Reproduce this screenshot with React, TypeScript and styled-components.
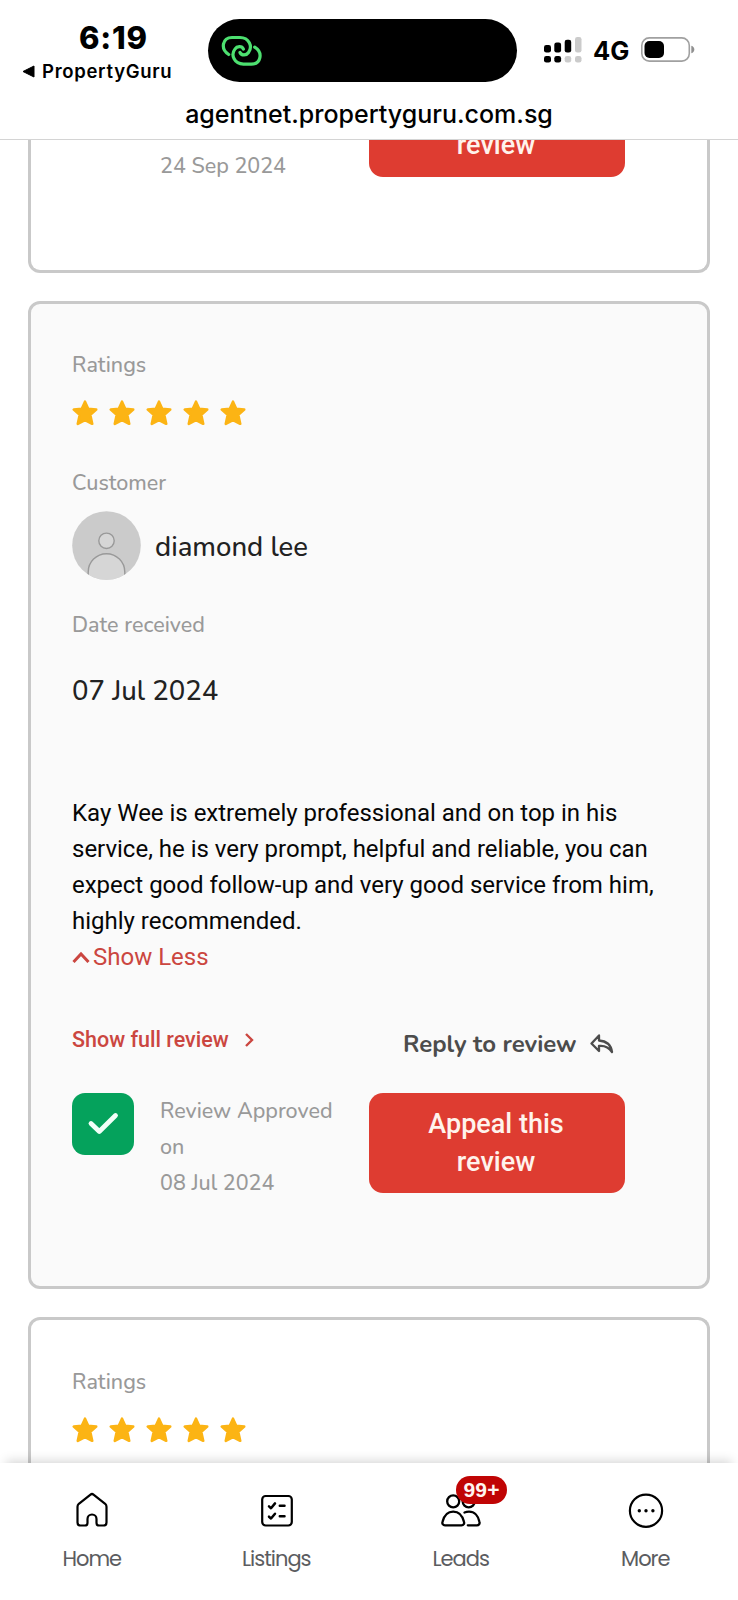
import React from "react";
import styled, { createGlobalStyle } from "styled-components";

const GlobalStyle = createGlobalStyle`
  * { box-sizing: border-box; }
  body { margin: 0; background: #fff; }
  button { font: inherit; border: 0; background: none; padding: 0; }
  p { margin: 0; }
  svg { display: block; flex: none; }
`;

const rounded = `"Nunito", Lato, "Open Sans", sans-serif`;
const system = `Inter, "Liberation Sans", sans-serif`;

const Screen = styled.div`
  display: flex;
  flex-direction: column;
  width: 738px;
  height: 1600px;
  overflow: hidden;
  background: #fff;
`;

const Header = styled.header`
  flex: none;
  height: 140px;
  border-bottom: 1px solid #d4d4d4;
  font-family: ${system};
  color: #000;
`;

const StatusBar = styled.div`
  display: flex;
  height: 97px;
  padding-top: 19.4px;
`;

const ClockColumn = styled.div`
  flex: none;
  width: 208px;
`;

const Clock = styled.div`
  padding-left: 79px;
  font-size: 31px;
  font-weight: 800;
  line-height: 38px;
  letter-spacing: 0.8px;
`;

const BackLink = styled.div`
  display: flex;
  align-items: center;
  gap: 7px;
  padding-left: 22px;
  margin-top: 2px;
  font-size: 18.5px;
  font-weight: 600;
  line-height: 24px;
  letter-spacing: 0.7px;
`;

const Island = styled.div`
  flex: none;
  width: 309px;
  height: 63px;
  padding: 16px 0 0 13px;
  border-radius: 32px;
  background: #000;
`;

const Indicators = styled.div`
  flex: none;
  display: flex;
  align-items: flex-start;
  padding: 18px 0 0 27px;
`;

const Network = styled.span`
  flex: none;
  width: 58.5px;
  padding-left: 11px;
  font-size: 25.5px;
  font-weight: 700;
  line-height: 30px;
  margin-top: -1px;
`;

const Address = styled.div`
  text-align: center;
  font-size: 25px;
  font-weight: 550;
  line-height: 35px;
`;

const Feed = styled.main`
  flex: 1;
  min-height: 0;
  overflow: hidden;
  display: flex;
  flex-direction: column;
  gap: 28px;
  padding: 0 28px;
`;

const Card = styled.section<{ $height: number; $tone?: string; $part?: "tail" | "head" }>`
  flex: none;
  height: ${(p) => p.$height}px;
  padding: ${(p) => (p.$part === "tail" ? "0" : "43.5px")} 41px 0;
  border: 3px solid #c9c9c9;
  border-radius: 12px;
  background: ${(p) => p.$tone ?? "#fff"};
  ${(p) => p.$part === "tail" && "border-top: 0; border-top-left-radius: 0; border-top-right-radius: 0;"}
  ${(p) => p.$part === "head" && "border-bottom: 0; border-bottom-left-radius: 0; border-bottom-right-radius: 0;"}
`;

const Label = styled.div<{ $top?: number }>`
  margin-top: ${(p) => p.$top ?? 0}px;
  font-family: ${rounded};
  font-size: 21.5px;
  font-weight: 500;
  line-height: 36px;
  color: #999;
`;

const Stars = styled.div`
  display: flex;
  gap: 11px;
  margin-top: 17px;
`;

const Customer = styled.div`
  display: flex;
  align-items: center;
  gap: 14px;
  margin-top: 10.1px;
`;

const Value = styled.div<{ $top?: number }>`
  margin-top: ${(p) => p.$top ?? 0}px;
  font-family: ${rounded};
  font-size: 27.5px;
  font-weight: 500;
  line-height: 36px;
  color: #222;
`;

const ReviewText = styled.p`
  margin-top: 85.9px;
  font-family: Roboto, sans-serif;
  font-size: 24px;
  line-height: 36px;
  letter-spacing: -0.01px;
  color: #060606;
  white-space: nowrap;
`;

const ShowLess = styled.button`
  display: flex;
  align-items: center;
  gap: 3px;
  font-family: Roboto, sans-serif;
  font-size: 24px;
  line-height: 36px;
  color: #cb4640;
`;

const Actions = styled.div`
  display: flex;
  height: 40px;
  margin-top: 47.5px;
`;

const FullReview = styled.button`
  display: flex;
  align-items: center;
  gap: 16.5px;
  width: 297px;
  height: 36px;
  font-family: Roboto, sans-serif;
  font-size: 21.5px;
  font-weight: 500;
  line-height: 36px;
  color: #cb4640;
`;

const Reply = styled.button`
  display: flex;
  align-items: center;
  gap: 13.5px;
  margin-top: 4px;
  padding-left: 34px;
  height: 36px;
  font-family: ${rounded};
  font-size: 24px;
  font-weight: 700;
  line-height: 36px;
  color: #4c4c4c;
`;

const Approval = styled.div<{ $top?: number }>`
  display: flex;
  align-items: flex-start;
  margin-top: ${(p) => p.$top ?? 0}px;
`;

const ApprovedBox = styled.div`
  display: flex;
  align-items: center;
  justify-content: center;
  width: 62px;
  height: 62px;
  border-radius: 13px;
  background: #05a25c;
`;

const ApprovedText = styled.div<{ $indent: number }>`
  width: 209px;
  margin-left: ${(p) => p.$indent}px;
`;

const Appeal = styled.button<{ $cut?: boolean }>`
  width: 256px;
  height: ${(p) => (p.$cut ? 36.5 : 100)}px;
  padding: ${(p) => (p.$cut ? "0 50px 0" : "0 51px 1px 49px")};
  border-radius: ${(p) => (p.$cut ? "0 0 14px 14px" : "14px")};
  background: #de3c31;
  font-family: Roboto, sans-serif;
  font-size: 27px;
  font-weight: 500;
  line-height: 38px;
  color: #fff3ec;
`;

const LastLine = styled.span`
  display: block;
  margin-top: -26.500px;
  margin-left: -2px;
`;

const Tabs = styled.nav`
  position: relative;
  flex: none;
  display: grid;
  grid-template-columns: repeat(4, 1fr);
  height: 137px;
  background: #fff;
  box-shadow: 0 -8px 10px -6px rgba(0, 0, 0, 0.17);
`;

const Tab = styled.a`
  display: flex;
  flex-direction: column;
  align-items: center;
  padding-top: 28px;
`;

const TabIcon = styled.div`
  position: relative;
  height: 40px;
`;

const TabLabel = styled.span`
  margin: 12.500px 1px 0 0;
  font-family: "Poppins", Inter, sans-serif;
  font-size: 21px;
  line-height: 30px;
  letter-spacing: -1px;
  color: #5b5c60;
`;

const Badge = styled.span`
  position: absolute;
  left: 14.5px;
  top: -15px;
  width: 51.500px;
  height: 28px;
  border-radius: 14px;
  background: #c00404;
  font-family: "Liberation Sans", sans-serif;
  font-size: 21px;
  font-weight: 700;
  line-height: 28px;
  letter-spacing: 0.2px;
  text-align: center;
  color: #fff4f0;
`;

const Star = () => (
  <svg width="26" height="26" viewBox="0 0 26 26">
    <path
      d="M13 1.700l3.200 7 8 .9-5.900 5.300 1.900 8.900L13 20l-7.200 3.800 1.900-8.900L1.800 9.600l8-.9z"
      fill="#fcb414"
      stroke="#fcb414"
      strokeWidth="2.600"
      strokeLinejoin="round"
    />
  </svg>
);

const LinkIcon = () => (
  <svg width="41" height="32" viewBox="0 0 41 32" fill="none" stroke="#4de070" strokeWidth="3.2" strokeLinecap="round">
    <path d="M7.700 19.500C-1 14 1.500 2.500 11 2.500h8c9 0 13 9 8.500 15-2 3-7 3.500-8.500 0" />
    <path d="M33.700 12.100C42.400 17.600 39.900 29.100 30.400 29.100h-8c-9 0-13-9-8.500-15 2-3 7-3.500 8.500 0" />
  </svg>
);

const Signal = () => (
  <svg width="38" height="28" viewBox="0 0 38 28">
    <rect x="0" y="8" width="7" height="7.500" rx="2.300" />
    <rect x="10.300" y="5.500" width="6.800" height="10" rx="2.300" />
    <rect x="20.700" y="2.700" width="6.500" height="12.800" rx="2.300" />
    <rect x="31" y="0" width="6.500" height="15.500" rx="2.300" fill="#cbcbcb" />
    <rect x="0" y="19" width="7" height="6.500" rx="2.300" />
    <rect x="10.300" y="19" width="6.800" height="6.500" rx="2.300" />
    <rect x="20.700" y="19" width="6.500" height="6.500" rx="2.300" fill="#cbcbcb" />
    <rect x="31" y="19" width="6.500" height="6.500" rx="2.300" fill="#cbcbcb" />
  </svg>
);

const Battery = () => (
  <svg width="54" height="25" viewBox="0 0 54 25">
    <rect x="0.800" y="0.900" width="47.500" height="23.200" rx="7.500" fill="none" stroke="#a0a0a0" strokeWidth="1.600" />
    <rect x="3.500" y="4" width="19.500" height="17" rx="5" />
    <path d="M50.300 8.800c4 1 4 6.400 0 7.400z" fill="#909090" />
  </svg>
);

const Avatar = () => (
  <svg width="69" height="69" viewBox="0 0 69 69">
    <clipPath id="face">
      <circle cx="34.500" cy="34.500" r="34.300" />
    </clipPath>
    <g clipPath="url(#face)">
      <rect width="69" height="69" fill="#cbcbcb" />
      <g fill="#d6d6d6" stroke="#999" strokeWidth="1.400">
        <circle cx="34.500" cy="29.800" r="7.700" />
        <path d="M16.200 64V61a18.300 18.300 0 0 1 36.600 0v3" />
      </g>
      <rect x="16.500" y="63.500" width="36" height="6" fill="#d6d6d6" />
    </g>
  </svg>
);

const HomeIcon = () => (
  <svg width="40" height="40" viewBox="0 0 40 40" fill="none" stroke="#000" strokeWidth="2.200" strokeLinejoin="round">
    <path d="M18.500 3.600 6.800 12.800Q5.500 14 5.500 15.800V31.500q0 3 3 3h4.500q2.500 0 2.500-2.500v-4a4.500 4.500 0 0 1 9 0v4q0 2.500 2.500 2.500h4.500q3 0 3-3V15.800q0-1.800-1.300-3L21.500 3.600q-1.500-1.200-3 0z" />
  </svg>
);

const ListIcon = () => (
  <svg width="40" height="40" viewBox="0 0 40 40" fill="none" stroke="#000" strokeLinecap="round" strokeLinejoin="round">
    <rect x="5.200" y="5" width="29.600" height="29.500" rx="3.500" strokeWidth="2.200" />
    <path d="M12 15.400l2 1.800 4-4.800M12 25.700l2 1.800 4-4.800M22.800 14.800h4.700M22.800 25.200h4.700" strokeWidth="2.500" />
  </svg>
);

const LeadsIcon = () => (
  <svg width="40" height="40" viewBox="0 0 40 40" fill="none" stroke="#000" strokeWidth="2.300" strokeLinecap="round">
    <circle cx="12.200" cy="10.400" r="6" />
    <circle cx="27.700" cy="10.400" r="6" />
    <path d="M4 34.300c-2.200 0-3-1.700-2.500-3.400C3 25 6.500 20.700 12.200 20.700S21.500 25 23 30.900c.5 1.700-.3 3.400-2.500 3.400z" />
    <path d="M23.500 21.500q2-.8 4.500-.8c5.500 0 9.300 4.500 10.500 10.200.4 1.700-.5 3.400-2.700 3.400h-9" />
  </svg>
);

const MoreIcon = () => (
  <svg width="40" height="40" viewBox="0 0 40 40">
    <circle cx="20" cy="19.700" r="16.100" fill="none" stroke="#000" strokeWidth="2.200" />
    <circle cx="13.300" cy="19.700" r="1.700" />
    <circle cx="20" cy="19.700" r="1.700" />
    <circle cx="26.900" cy="19.700" r="1.700" />
  </svg>
);

const Rating = () => (
  <>
    <Label>Ratings</Label>
    <Stars>
      {[1, 2, 3, 4, 5].map((n) => (
        <Star key={n} />
      ))}
    </Stars>
  </>
);

export default function App() {
  return (
    <Screen>
      <GlobalStyle />
      <Header>
        <StatusBar>
          <ClockColumn>
            <Clock>6:19</Clock>
            <BackLink>
              <svg width="13" height="13" viewBox="0 0 13 13">
                <path d="M12 1v11L1 6.500z" stroke="#000" strokeLinejoin="round" />
              </svg>
              PropertyGuru
            </BackLink>
          </ClockColumn>
          <Island>
            <LinkIcon />
          </Island>
          <Indicators>
            <Signal />
            <Network>4G</Network>
            <Battery />
          </Indicators>
        </StatusBar>
        <Address>agentnet.propertyguru.com.sg</Address>
      </Header>

      <Feed>
        <Card $height={132.5} $part="tail">
          <Approval>
            <ApprovedText $indent={88}>
              <Label $top={8}>24 Sep 2024</Label>
            </ApprovedText>
            <Appeal $cut>
              <LastLine>review</LastLine>
            </Appeal>
          </Approval>
        </Card>

        <Card $height={988.5} $tone="#fafafa">
          <Rating />
          <Label $top={39.4}>Customer</Label>
          <Customer>
            <Avatar />
            <Value $top={3}>diamond lee</Value>
          </Customer>
          <Label $top={26.2}>Date received</Label>
          <Value $top={30}>07 Jul 2024</Value>
          <ReviewText>
            Kay Wee is extremely professional and on top in his
            <br />
            service, he is very prompt, helpful and reliable, you can
            <br />
            expect good follow-up and very good service from him,
            <br />
            highly recommended.
          </ReviewText>
          <ShowLess>
            <svg width="18" height="12" viewBox="0 0 18 12" fill="none" stroke="currentColor" strokeWidth="3">
              <path d="M1.500 11 9 3l7.500 8" />
            </svg>
            Show Less
          </ShowLess>
          <Actions>
            <FullReview>
              Show full review
              <svg width="9" height="14" viewBox="0 0 9 14" fill="none" stroke="currentColor" strokeWidth="2.400">
                <path d="M1 1l6 6-6 6" />
              </svg>
            </FullReview>
            <Reply>
              Reply to review
              <svg width="24" height="20" viewBox="0 0 24 20" fill="none" stroke="currentColor" strokeWidth="2.300" strokeLinejoin="round">
                <path d="M9 1.500 1.500 9.500 9 17v-5c5-.5 10 1.500 13 6C21 11 16.500 7 9 6.500z" />
              </svg>
            </Reply>
          </Actions>
          <Approval $top={31.2}>
            <ApprovedBox>
              <svg width="32" height="24" viewBox="0 0 32 24" fill="none" stroke="#f2fff8" strokeWidth="4.800" strokeLinecap="round" strokeLinejoin="round">
                <path d="M4 11.500l8.300 8L28.500 3.500" />
              </svg>
            </ApprovedBox>
            <ApprovedText $indent={26}>
              <Label>
                Review Approved
                <br />
                on
                <br />
                08 Jul 2024
              </Label>
            </ApprovedText>
            <Appeal>Appeal this review</Appeal>
          </Approval>
        </Card>

        <Card $height={160} $part="head">
          <Rating />
        </Card>
      </Feed>

      <Tabs>
        <Tab>
          <TabIcon><HomeIcon /></TabIcon>
          <TabLabel>Home</TabLabel>
        </Tab>
        <Tab>
          <TabIcon><ListIcon /></TabIcon>
          <TabLabel>Listings</TabLabel>
        </Tab>
        <Tab>
          <TabIcon>
            <LeadsIcon />
            <Badge>99+</Badge>
          </TabIcon>
          <TabLabel>Leads</TabLabel>
        </Tab>
        <Tab>
          <TabIcon><MoreIcon /></TabIcon>
          <TabLabel>More</TabLabel>
        </Tab>
      </Tabs>
    </Screen>
  );
}
